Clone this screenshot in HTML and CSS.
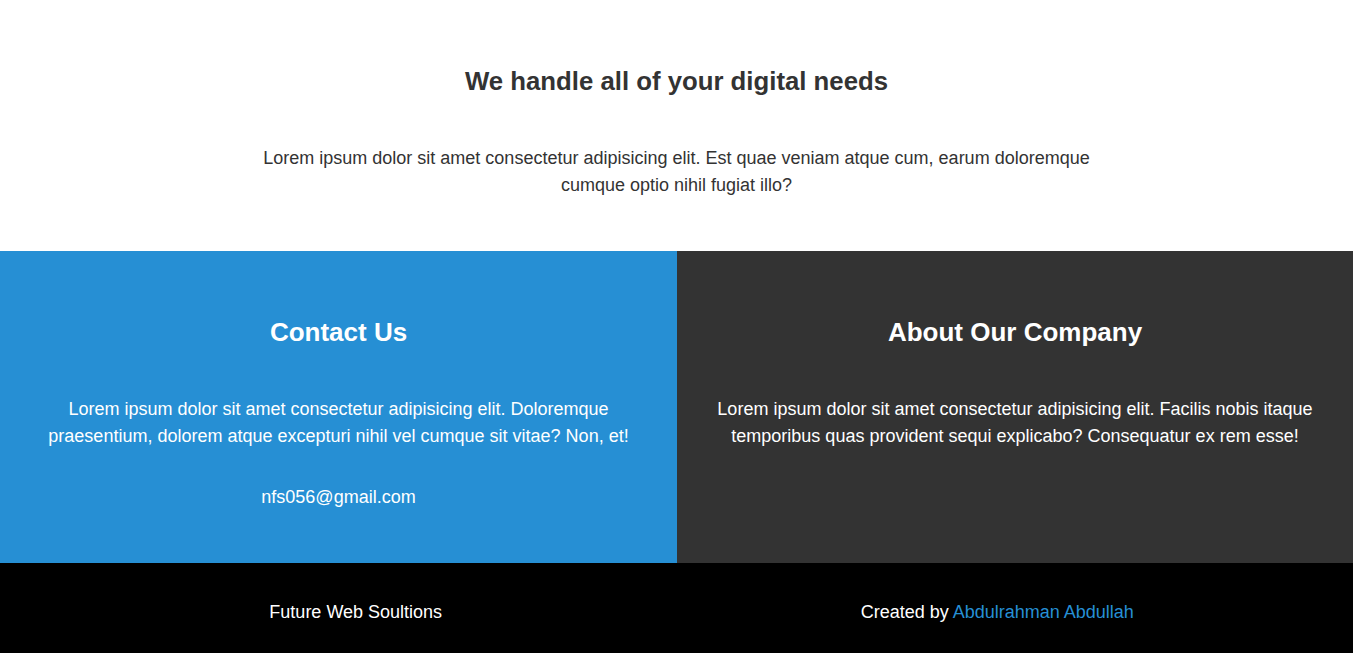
FILE: index.html
```html
<!DOCTYPE html>
<html lang="en">
<head>
<meta charset="utf-8">
<title>Future Web Soultions</title>
<link rel="stylesheet" href="styles.css">
</head>
<body>
<section class="intro">
  <h2 class="title">We handle all of your digital needs</h2>
  <p class="intro-text">Lorem ipsum dolor sit amet consectetur adipisicing elit. Est quae veniam atque cum, earum doloremque cumque optio nihil fugiat illo?</p>
</section>
<section class="info">
  <div class="info-col contact">
    <h2 class="title">Contact Us</h2>
    <p class="col-text">Lorem ipsum dolor sit amet consectetur adipisicing elit. Doloremque praesentium, dolorem atque excepturi nihil vel cumque sit vitae? Non, et!</p>
    <p class="col-text email">nfs056@gmail.com</p>
  </div>
  <div class="info-col about">
    <h2 class="title">About Our Company</h2>
    <p class="col-text">Lorem ipsum dolor sit amet consectetur adipisicing elit. Facilis nobis itaque temporibus quas provident sequi explicabo? Consequatur ex rem esse!</p>
  </div>
</section>
<footer class="footer">
  <div class="footer-col">Future Web Soultions</div>
  <div class="footer-col">Created by <a class="author" href="#">Abdulrahman Abdullah</a></div>
</footer>
</body>
</html>
```
FILE: styles.css
```css
* { box-sizing: border-box; }
html, body { margin: 0; padding: 0; }
body {
  font-family: "Liberation Sans", Arial, sans-serif;
  font-size: 18px;
  line-height: 27px;
  color: #333;
  background: #fff;
}
.title {
  margin: 0 0 49px;
  font-size: 26px;
  line-height: 30px;
  font-weight: bold;
}
.intro {
  padding: 66px 0 52px;
  text-align: center;
}
.intro .title {
  color: #333;
  font-size: 25.75px;
}
.intro-text {
  margin: 0 auto;
  max-width: 860px;
  color: #333;
}
.info {
  display: grid;
  grid-template-columns: 677px 1fr;
}
.info-col {
  padding: 66px 36px 52px;
  text-align: center;
  color: #fff;
}
.contact { background: #268fd4; }
.about { background: #333; }
.info-col .title { color: #fff; }
.col-text { margin: 0; }
.email { margin-top: 34px; }
.footer {
  display: grid;
  grid-template-columns: 1fr 1fr;
  padding: 36px 35px 0;
  height: 90px;
  align-items: start;
  background: #000;
  color: #fff;
  text-align: center;
}
.author {
  color: #268fd4;
  text-decoration: none;
}
```
